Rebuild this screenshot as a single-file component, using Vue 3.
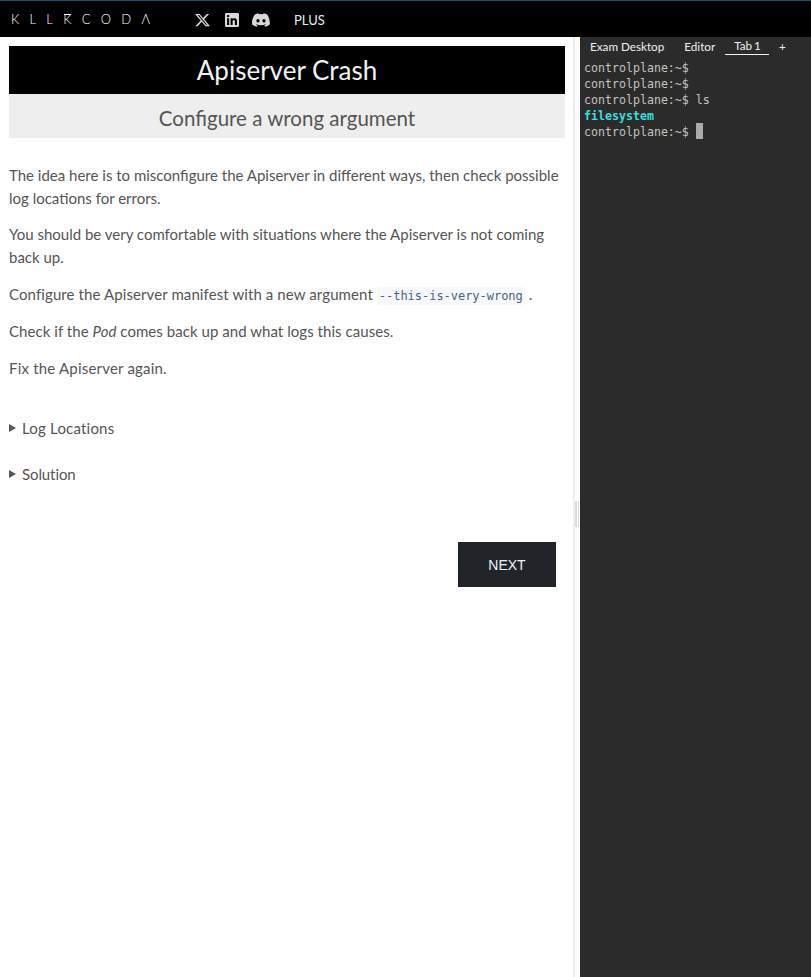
<script setup>
const paras = [
  'The idea here is to misconfigure the Apiserver in different ways, then check possible log locations for errors.',
  'You should be very comfortable with situations where the Apiserver is not coming back up.'
]
const lines = [
  { text: 'controlplane:~$ ' },
  { text: 'controlplane:~$ ' },
  { text: 'controlplane:~$ ls' },
  { text: 'filesystem', dir: true },
  { text: 'controlplane:~$ ', cursor: true }
]
</script>

<template>
  <div class="page">
    <header class="top">
      <div class="logo"><span>K</span><span>L</span><span>L</span><span class="rk">K</span><span>C</span><span>O</span><span>D</span><span>Λ</span></div>
      <div class="social">
        <svg class="x" width="15" height="14" viewBox="0 0 24 24" preserveAspectRatio="none" fill="#d8d8d8"><path d="M18.900 1.500h3.700l-8 9.200L24 22.500h-7.400l-5.800-7.600-6.600 7.600H.5l8.600-9.800L0 1.500h7.600l5.200 6.900 6.100-6.900zm-1.300 18.900h2L6.500 3.500H4.300l13.300 16.900z"/></svg>
        <svg class="li" width="14" height="14" viewBox="0 0 24 24" fill="#d8d8d8"><path d="M22 0H2C.9 0 0 .9 0 2v20c0 1.100.9 2 2 2h20c1.100 0 2-.9 2-2V2c0-1.100-.9-2-2-2zM7.100 20.500H3.600V9h3.500v11.500zM5.300 7.400c-1.100 0-2.100-.9-2.100-2.100s1-2 2.100-2 2.100.9 2.100 2-1 2.100-2.100 2.100zm15.200 13.100H17v-5.600c0-1.300 0-3-1.800-3s-2.100 1.400-2.100 2.900v5.700H9.600V9h3.400v1.600c.5-.9 1.600-1.800 3.300-1.800 3.600 0 4.200 2.400 4.200 5.400v6.300z"/></svg>
        <svg class="dc" width="18" height="14" viewBox="0 0 24 18" fill="#d8d8d8"><path d="M20.300 1.500A19.800 19.800 0 0 0 15.400 0c-.2.400-.5.900-.6 1.300a18.300 18.300 0 0 0-5.500 0C9.100.9 8.800.4 8.600 0 6.900.3 5.200.8 3.700 1.500.6 6.100-.3 10.600.100 15c2 1.500 4 2.400 6 3 .5-.7.900-1.400 1.300-2.100-.7-.3-1.400-.6-2-1l.5-.4c3.900 1.800 8.200 1.800 12 0l.5.400c-.6.400-1.300.7-2 1 .4.700.8 1.400 1.300 2.100 2-.6 4-1.500 6-3 .5-5.100-.8-9.500-3.400-13.500zM8 12.300c-1.200 0-2.100-1.100-2.100-2.400s.9-2.400 2.100-2.400 2.200 1.100 2.100 2.400c0 1.300-.9 2.400-2.100 2.400zm8 0c-1.200 0-2.100-1.100-2.100-2.400s.9-2.400 2.100-2.400 2.200 1.100 2.100 2.400c0 1.300-.9 2.400-2.100 2.400z"/></svg>
      </div>
      <span class="plus">PLUS</span>
    </header>

    <main class="body">
      <section class="left">
        <h1 class="title">Apiserver Crash</h1>
        <h2 class="subtitle">Configure a wrong argument</h2>
        <div class="content">
          <p v-for="p in paras" :key="p">{{ p }}</p>
          <p class="wide">Configure the Apiserver manifest with a new argument <code>--this-is-very-wrong</code> .</p>
          <p class="wide pod">Check if the <em>Pod</em> comes back up and what logs this causes.</p>
          <p class="wide fix">Fix the Apiserver again.</p>
        </div>
        <div class="details">
          <div class="detail"><i class="tri"></i>Log Locations</div>
          <div class="detail sol"><i class="tri"></i>Solution</div>
        </div>
        <div class="actions"><button class="next">NEXT</button></div>
      </section>

      <div class="gutter"><i></i><i></i></div>

      <section class="term">
        <nav class="tabs">
          <span class="tab">Exam Desktop</span>
          <span class="tab">Editor</span>
          <span class="tab active">Tab 1</span>
          <span class="tab add">+</span>
        </nav>
        <div class="screen">
          <div v-for="(l, i) in lines" :key="i" class="line" :class="{ dir: l.dir }">{{ l.text }}<b v-if="l.cursor" class="cursor"></b></div>
        </div>
      </section>
    </main>
  </div>
</template>

<style>
html, body { margin: 0; padding: 0; background: #fff; }
</style>

<style scoped>
.page {
  width: 811px;
  height: 977px;
  display: flex;
  flex-direction: column;
  overflow: hidden;
  font-family: Lato, "Noto Sans", sans-serif;
}
.top {
  height: 36px;
  flex: none;
  background: #000;
  border-top: 1px solid #0b5d73;
  display: flex;
  align-items: center;
  color: #eee;
}
.logo {
  display: flex;
  margin-left: 11px;
  width: 139px;
  justify-content: space-between;
  font-size: 13px;
  font-weight: 300;
  color: #fff;
}
.rk { position: relative; }
.rk::before {
  content: "";
  position: absolute;
  left: 1px;
  right: 0;
  top: 3px;
  height: 1px;
  background: #fff;
}
.social {
  display: flex;
  align-items: center;
  margin-left: 45px;
  padding-top: 1px;
}
.li { margin-left: 15px; }
.dc { margin-left: 13px; }
.plus {
  margin-left: 24px;
  padding-top: 1px;
  font-size: 13px;
  color: #e4eefa;
}
.body { flex: 1; display: flex; min-height: 0; }
.left {
  width: 575px;
  flex: none;
  box-sizing: border-box;
  padding: 9px 8px 0 9px;
  border-right: 2px solid #eee;
  color: #555;
}
.title {
  margin: 0;
  height: 48px;
  line-height: 49px;
  background: #000;
  color: #f2f2f2;
  font-size: 26px;
  font-weight: 400;
  text-align: center;
}
.subtitle {
  margin: 0;
  height: 44px;
  line-height: 48px;
  background: #eee;
  color: #555;
  font-size: 20.500px;
  font-weight: 400;
  text-align: center;
}
.content { padding-top: 25.500px; font-size: 15px; line-height: 23.200px; }
.content p { margin: 0 0 13.300px; }
.content .wide { letter-spacing: 0.1px; margin-bottom: 13.800px; }
.content .pod { letter-spacing: 0.05px; }
.content .fix { letter-spacing: 0.2px; }
code {
  display: inline-block;
  font-family: "DejaVu Sans Mono", monospace;
  font-size: 12px;
  line-height: 18px;
  letter-spacing: -0.03px;
  color: #476582;
  background: #f6f8fa;
  border-radius: 3px;
  padding: 0 2px;
}
.details { margin-top: 25px; }
.detail {
  height: 46px;
  line-height: 46px;
  font-size: 15px;
  letter-spacing: 0.2px;
  display: flex;
  align-items: center;
  gap: 6px;
}
.sol { letter-spacing: -0.1px; }
.tri {
  width: 0;
  height: 0;
  border-left: 7px solid #555;
  border-top: 4px solid transparent;
  border-bottom: 4px solid transparent;
}
.actions { display: flex; justify-content: flex-end; padding: 45px 9px 0 0; }
.next {
  width: 98px;
  height: 45px;
  background: #212529;
  color: #e8f2fc;
  border: 0;
  font-family: "Liberation Sans", sans-serif;
  font-size: 14px;
}
.gutter {
  width: 5px;
  flex: none;
  display: flex;
  gap: 1px;
  padding-top: 14px;
  box-sizing: border-box;
  align-items: center;
}
.gutter i { width: 1px; height: 26px; background: #ddd; }
.gutter i:first-child { width: 2px; }
.term {
  flex: 1;
  min-width: 0;
  background: #2b2b2b;
  color: #f0f0f0;
}
.tabs {
  height: 18px;
  display: flex;
  align-items: center;
  font-size: 11.700px;
  padding-left: 10px;
}
.tab { margin-right: 20px; white-space: nowrap; }
.tab.active {
  border-bottom: 1px solid #f0f0f0;
  margin: 0 10px 0 -10px;
  padding: 0 8px 0 9px;
  line-height: 17px;
  word-spacing: -1px;
}
.tab.add { margin: 0; }
.screen {
  padding: 6px 0 0 4px;
  font-family: "DejaVu Sans Mono", monospace;
  font-size: 11.620px;
  line-height: 15.980px;
  color: #c6c4c0;
  white-space: pre;
}
.line { height: 16px; }
.dir { color: #37dede; font-weight: 700; }
.cursor {
  display: inline-block;
  width: 7px;
  height: 16px;
  margin-top: -2px;
  background: #aaa;
  vertical-align: top;
}
</style>
